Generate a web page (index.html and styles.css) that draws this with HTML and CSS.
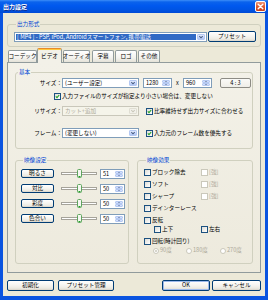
FILE: index.html
```html
<!DOCTYPE html>
<html lang="ja">
<head>
<meta charset="utf-8">
<title>出力設定</title>
<link rel="stylesheet" href="styles.css">
</head>
<body>
<div class="window">
  <div class="titlebar">
    <span class="title">出力設定</span>
    <span class="close"><svg viewBox="0 0 9 9" width="9" height="9"><path d="M2.2 2.2L6.8 6.8M6.8 2.2L2.2 6.8" stroke="#fff" stroke-width="1.4" stroke-linecap="round"/></svg></span>
  </div>
  <div class="body">
    <fieldset class="group g-format">
      <legend>出力形式</legend>
      <div class="frow">
        <div class="combo combo-format">
          <span class="combo-text sel">[ MP4 ] - PSP, iPod, Androidスマートフォン, 携帯電話</span>
          <span class="combo-btn"><svg viewBox="0 0 7 6" width="7" height="6"><path d="M1.5 2L3.5 4L5.5 2" fill="none" stroke="#4D6185" stroke-width="1.2"/></svg></span>
        </div>
        <button class="btn btn-preset">プリセット</button>
      </div>
    </fieldset>

    <div class="tabs">
      <span class="tab t-codec">コーデック</span>
      <span class="tab t-video active">ビデオ</span>
      <span class="tab t-audio">オーディオ</span>
      <span class="tab t-sub">字幕</span>
      <span class="tab t-logo">ロゴ</span>
      <span class="tab t-other">その他</span>
    </div>

    <div class="panel">
      <fieldset class="group g-basic">
        <legend>基本</legend>
        <div class="brow r1">
          <span class="lbl">サイズ：</span>
          <div class="combo combo-small">
            <span class="combo-text">(ユーザー設定)</span>
            <span class="combo-btn"><svg viewBox="0 0 7 6" width="7" height="6"><path d="M1.5 2L3.5 4L5.5 2" fill="none" stroke="#4D6185" stroke-width="1.2"/></svg></span>
          </div>
          <div class="spin spin-size first">
            <span class="spin-val">1280</span>
            <span class="spin-btns"><i class="up"></i><i class="dn"></i></span>
          </div>
          <span class="times">x</span>
          <div class="spin spin-size">
            <span class="spin-val">960</span>
            <span class="spin-btns"><i class="up"></i><i class="dn"></i></span>
          </div>
          <button class="btn btn-ratio">4 : 3</button>
        </div>
        <div class="brow r2">
          <span class="chk on"><svg viewBox="0 0 5 5" width="5" height="5"><path d="M0.8 2.4L2 3.6L4.2 1" fill="none" stroke="#21A121" stroke-width="1.1"/></svg></span>
          <span class="ctext">入力ファイルのサイズが指定より小さい場合は、変更しない</span>
        </div>
        <div class="brow r3">
          <span class="lbl">リサイズ：</span>
          <div class="combo combo-small disabled">
            <span class="combo-text">カット+追加</span>
            <span class="combo-btn"><svg viewBox="0 0 7 6" width="7" height="6"><path d="M1.5 2L3.5 4L5.5 2" fill="none" stroke="#C9C7BA" stroke-width="1.2"/></svg></span>
          </div>
          <span class="chk on side"><svg viewBox="0 0 5 5" width="5" height="5"><path d="M0.8 2.4L2 3.6L4.2 1" fill="none" stroke="#21A121" stroke-width="1.1"/></svg></span>
          <span class="ctext">比率維持せず出力サイズに合わせる</span>
        </div>
        <div class="brow r4">
          <span class="lbl">フレーム：</span>
          <div class="combo combo-small">
            <span class="combo-text">(変更しない)</span>
            <span class="combo-btn"><svg viewBox="0 0 7 6" width="7" height="6"><path d="M1.5 2L3.5 4L5.5 2" fill="none" stroke="#4D6185" stroke-width="1.2"/></svg></span>
          </div>
          <span class="chk on side"><svg viewBox="0 0 5 5" width="5" height="5"><path d="M0.8 2.4L2 3.6L4.2 1" fill="none" stroke="#21A121" stroke-width="1.1"/></svg></span>
          <span class="ctext">入力元のフレーム数を優先する</span>
        </div>
      </fieldset>

      <div class="lower">
        <fieldset class="group g-adjust">
          <legend>映像設定</legend>
          <div class="arow">
            <button class="btn btn-adj">明るさ</button>
            <svg class="slider" viewBox="0 0 38 11" width="38" height="11"><rect x="1.5" y="4.5" width="35" height="2" fill="#fff" stroke="#A5A39A" stroke-width="1"/><rect x="17.5" y="1.5" width="4" height="8" rx="1" fill="#F6F6F2" stroke="#5DA55D" stroke-width="1"/><line x1="18.5" y1="8.5" x2="20.5" y2="8.5" stroke="#21A121"/></svg>
            <div class="spin spin-adj"><span class="spin-val">51</span><span class="spin-btns"><i class="up"></i><i class="dn"></i></span></div>
          </div>
          <div class="arow">
            <button class="btn btn-adj">対比</button>
            <svg class="slider" viewBox="0 0 38 11" width="38" height="11"><rect x="1.5" y="4.5" width="35" height="2" fill="#fff" stroke="#A5A39A" stroke-width="1"/><rect x="17.5" y="1.5" width="4" height="8" rx="1" fill="#F6F6F2" stroke="#5DA55D" stroke-width="1"/><line x1="18.5" y1="8.5" x2="20.5" y2="8.5" stroke="#21A121"/></svg>
            <div class="spin spin-adj"><span class="spin-val">50</span><span class="spin-btns"><i class="up"></i><i class="dn"></i></span></div>
          </div>
          <div class="arow">
            <button class="btn btn-adj">彩度</button>
            <svg class="slider" viewBox="0 0 38 11" width="38" height="11"><rect x="1.5" y="4.5" width="35" height="2" fill="#fff" stroke="#A5A39A" stroke-width="1"/><rect x="17.5" y="1.5" width="4" height="8" rx="1" fill="#F6F6F2" stroke="#5DA55D" stroke-width="1"/><line x1="18.5" y1="8.5" x2="20.5" y2="8.5" stroke="#21A121"/></svg>
            <div class="spin spin-adj"><span class="spin-val">50</span><span class="spin-btns"><i class="up"></i><i class="dn"></i></span></div>
          </div>
          <div class="arow">
            <button class="btn btn-adj">色合い</button>
            <svg class="slider" viewBox="0 0 38 11" width="38" height="11"><rect x="1.5" y="4.5" width="35" height="2" fill="#fff" stroke="#A5A39A" stroke-width="1"/><rect x="17.5" y="1.5" width="4" height="8" rx="1" fill="#F6F6F2" stroke="#5DA55D" stroke-width="1"/><line x1="18.5" y1="8.5" x2="20.5" y2="8.5" stroke="#21A121"/></svg>
            <div class="spin spin-adj"><span class="spin-val">50</span><span class="spin-btns"><i class="up"></i><i class="dn"></i></span></div>
          </div>
        </fieldset>

        <fieldset class="group g-effect">
          <legend>映像効果</legend>
          <div class="erow">
            <span class="item wide"><span class="chk"></span><span>ブロック除去</span></span>
            <span class="item"><span class="chk dis"></span><span class="dim">[強]</span></span>
          </div>
          <div class="erow">
            <span class="item wide"><span class="chk"></span><span>ソフト</span></span>
            <span class="item"><span class="chk dis"></span><span class="dim">[強]</span></span>
          </div>
          <div class="erow">
            <span class="item wide"><span class="chk"></span><span>シャープ</span></span>
            <span class="item"><span class="chk dis"></span><span class="dim">[強]</span></span>
          </div>
          <div class="erow">
            <span class="item"><span class="chk"></span><span>デインターレース</span></span>
          </div>
          <div class="erow">
            <span class="item"><span class="chk"></span><span>反転</span></span>
          </div>
          <div class="erow sub">
            <span class="item flip"><span class="chk"></span><span>上下</span></span>
            <span class="item"><span class="chk"></span><span>左右</span></span>
          </div>
          <div class="erow">
            <span class="item"><span class="chk"></span><span>回転(時計回り)</span></span>
          </div>
          <div class="erow sub radios">
            <span class="item r90"><span class="radio sel"></span><span class="dim">90度</span></span>
            <span class="item r180"><span class="radio"></span><span class="dim">180度</span></span>
            <span class="item"><span class="radio"></span><span class="dim">270度</span></span>
          </div>
        </fieldset>
      </div>
    </div>

    <div class="footer">
      <div class="fgroup left">
        <button class="btn btn-init">初期化</button>
        <button class="btn btn-manage">プリセット管理</button>
      </div>
      <div class="fgroup right">
        <button class="btn btn-ok default">OK</button>
        <button class="btn btn-cancel">キャンセル</button>
      </div>
    </div>
  </div>
</div>
</body>
</html>
```

FILE: styles.css
```css
* { box-sizing: border-box; }

html, body {
  margin: 0;
  padding: 0;
}

body {
  width: 268px;
  height: 300px;
  overflow: hidden;
  font-family: "Noto Sans CJK JP", "Noto Sans", sans-serif;
  font-size: 5.6px;
  line-height: 7px;
  color: #000;
  background: #0054E3;
}

.window {
  width: 268px;
  height: 300px;
  display: flex;
  flex-direction: column;
}

.titlebar {
  flex: none;
  height: 13px;
  display: flex;
  align-items: center;
  justify-content: space-between;
  padding: 0 2px 0 3px;
  background: linear-gradient(180deg, #3D8EF8 0%, #0B63EC 15%, #0058EE 45%, #0054E3 75%, #004AD6 100%);
  color: #fff;
}

.title {
  font-size: 6px;
  line-height: 7px;
  font-weight: bold;
  text-shadow: 0.5px 0.5px 0 #0A2A8A;
}

.close {
  width: 11px;
  height: 11px;
  border: 1px solid #fff;
  border-radius: 2px;
  background: linear-gradient(180deg, #EE9678 0%, #DD5A30 50%, #C8401A 100%);
  display: flex;
  align-items: center;
  justify-content: center;
}

.body {
  flex: 1;
  display: flex;
  flex-direction: column;
  background: #ECE9D8;
  border-style: solid;
  border-color: #0A54E0;
  border-width: 0 3px 4px 3px;
  padding: 8px 4px 0 4px;
}

/* group boxes */
.group {
  margin: 0;
  padding: 0;
  min-width: 0;
  border: 1px solid #D0D0BF;
  border-radius: 3px;
}

.group legend {
  margin-left: 2px;
  padding: 0 1px;
  height: 6px;
  line-height: 6px;
  color: #0046D5;
}

.g-format {
  flex: none;
  padding: 4px 4px 4px 6px;
}

.frow {
  display: flex;
  align-items: center;
  gap: 1px;
  height: 11px;
}

/* combo boxes */
.combo {
  display: flex;
  height: 10px;
  border: 1px solid #7F9DB9;
  background: #fff;
  padding: 1px;
  flex: none;
}

.combo-text {
  flex: 1;
  padding-left: 1px;
  line-height: 6px;
  white-space: nowrap;
  overflow: hidden;
}

.combo-text.sel {
  background: #316AC5;
  color: #fff;
}

.combo-btn {
  width: 8px;
  margin-left: 1px;
  border: 1px solid #B4C8F2;
  border-radius: 1px;
  background: linear-gradient(180deg, #E2EAFD 0%, #C3D5FB 60%, #B1C6F5 100%);
  display: flex;
  align-items: center;
  justify-content: center;
}

.combo.disabled {
  border-color: #C9C7BA;
  background: #F5F4EA;
  color: #ACA899;
}

.combo.disabled .combo-btn {
  border-color: #E0DED3;
  background: #F2F1EA;
}

.combo-format { width: 193px; }
.combo-small { width: 77px; }

/* buttons */
.btn {
  font: inherit;
  font-size: 5.6px;
  line-height: 7px;
  padding: 0;
  margin: 0;
  color: #000;
  border: 1px solid #003C74;
  border-radius: 2px;
  background: linear-gradient(180deg, #FFFFFF 0%, #F6F5F1 45%, #ECEAE2 80%, #D8D3C8 100%);
  display: flex;
  align-items: center;
  justify-content: center;
  white-space: nowrap;
  flex: none;
}

.btn-preset { width: 48px; height: 11px; }

.btn.default {
  box-shadow: inset 0 0 0 1px #9DB9EB;
}

/* tabs */
.tabs {
  flex: none;
  height: 14px;
  margin-top: 1px;
  padding-left: 1px;
  display: flex;
  align-items: flex-end;
}

.tab {
  height: 12px;
  border: 1px solid #919B9C;
  border-bottom: none;
  border-radius: 2px 2px 0 0;
  background: linear-gradient(180deg, #FFFFFF 0%, #F4F3EF 60%, #E4E2D8 100%);
  display: flex;
  align-items: center;
  justify-content: center;
  white-space: nowrap;
}

.tab.active {
  height: 15px;
  margin-bottom: -1px;
  border-top-color: #E68B2C;
  box-shadow: inset 0 1px 0 #FFC83C;
  background: #F3F1E8;
  position: relative;
  z-index: 1;
}

.t-codec { width: 29px; }
.t-video { width: 25px; }
.t-audio { width: 27px; margin-left: 1px; }
.t-sub { width: 22px; margin-left: 2px; }
.t-logo { width: 22px; margin-left: 1px; }
.t-other { width: 22px; margin-left: 1px; }

/* panel */
.panel {
  flex: none;
  height: 211px;
  border: 1px solid #919B9C;
  background: linear-gradient(180deg, #F3F1E8 0%, #EDEADD 100%);
  padding: 6px 7px 8px 7px;
  display: flex;
  flex-direction: column;
  gap: 8px;
}

.g-basic {
  flex: none;
  padding: 3px 0 10px 0;
}

.brow {
  display: flex;
  align-items: center;
  white-space: nowrap;
}

.r1, .r3, .r4 { height: 10px; }
.r2 { height: 7px; margin-top: 5px; padding-left: 38px; }
.r3 { margin-top: 6px; }
.r4 { margin-top: 12px; }

.lbl {
  width: 46px;
  text-align: right;
  flex: none;
}

.ctext { margin-left: 1px; }

/* spin boxes */
.spin {
  display: flex;
  height: 10px;
  border: 1px solid #7F9DB9;
  background: #fff;
  padding: 1px;
  flex: none;
}

.spin-val {
  flex: 1;
  padding-left: 1px;
  line-height: 6px;
}

.spin-btns {
  width: 8px;
  display: flex;
  flex-direction: column;
}

.spin-btns i {
  flex: 1;
  border: 1px solid #B4C8F2;
  border-radius: 1px;
  background: linear-gradient(180deg, #E2EAFD 0%, #BFD1F9 100%);
  display: flex;
  align-items: center;
  justify-content: center;
}

.spin-btns i::before {
  content: "";
  width: 0;
  height: 0;
  border-left: 1.5px solid transparent;
  border-right: 1.5px solid transparent;
}

.spin-btns i.up::before { border-bottom: 1.5px solid #4D6185; }
.spin-btns i.dn::before { border-top: 1.5px solid #4D6185; }

.spin-size { width: 29px; }
.spin-size.first { margin-left: 4px; }

.times {
  width: 11px;
  text-align: center;
  flex: none;
}

.btn-ratio {
  width: 31px;
  height: 10px;
  margin-left: 8px;
  border-color: #8D8C85;
  background: linear-gradient(180deg, #FAFAF7 0%, #EFEEE8 100%);
}

/* checkboxes */
.chk {
  width: 7px;
  height: 7px;
  flex: none;
  border: 1px solid #1C5180;
  background: linear-gradient(135deg, #DCDCD7 0%, #FFFFFF 100%);
  display: flex;
  align-items: center;
  justify-content: center;
}

.chk.dis {
  border-color: #CAC8BB;
  background: #FFFFFF;
}

.chk.side { margin-left: 7px; }

.dim { color: #ACA899; }

/* lower groups */
.lower {
  flex: 1;
  display: flex;
  gap: 8px;
}

.g-adjust {
  width: 114px;
  padding: 5px 0 0 5px;
}

.arow {
  display: flex;
  align-items: center;
  height: 11px;
  margin-bottom: 4px;
}

.btn-adj { width: 33px; height: 9px; }

.slider {
  display: block;
  flex: none;
  margin-left: 6px;
}

.spin-adj { width: 25px; margin-left: 2px; }

.g-effect {
  width: 116px;
  padding: 6px 0 0 6px;
}

.erow {
  display: flex;
  align-items: center;
  height: 7px;
  margin-bottom: 5px;
  white-space: nowrap;
}

.erow.sub { margin-top: -3px; }

.item {
  display: flex;
  align-items: center;
  gap: 1px;
}

.item.wide { width: 57px; }
.item.flip { width: 47px; margin-left: 10px; }
.item.r90 { width: 33px; margin-left: 9px; }
.item.r180 { width: 34px; }

.radio {
  width: 6px;
  height: 6px;
  border-radius: 50%;
  border: 1px solid #CAC8BB;
  background: #FFFFFF;
  flex: none;
  display: flex;
  align-items: center;
  justify-content: center;
}

.radio.sel::before {
  content: "";
  width: 2px;
  height: 2px;
  border-radius: 50%;
  background: #CAC8BB;
}

/* footer */
.footer {
  flex: none;
  margin-top: 7px;
  display: flex;
  justify-content: space-between;
}

.fgroup { display: flex; }
.fgroup.left { gap: 4px; }
.fgroup.right { gap: 2px; }

.footer .btn { height: 11px; }
.btn-init { width: 47px; }
.btn-manage { width: 56px; }
.btn-ok { width: 48px; }
.btn-cancel { width: 49px; }
```
